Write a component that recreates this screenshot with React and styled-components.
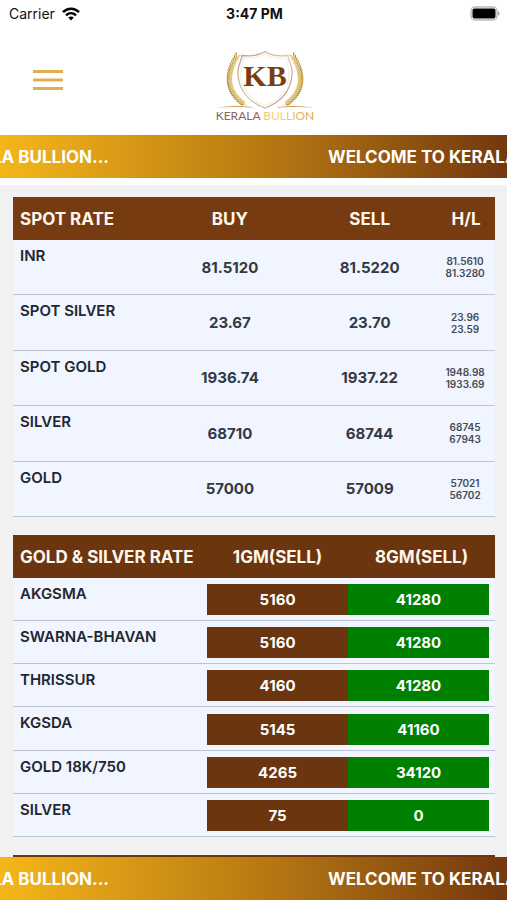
import React from "react";
import styled, { createGlobalStyle } from "styled-components";

const GlobalStyle = createGlobalStyle`
  *, *::before, *::after { box-sizing: border-box; }
  body {
    margin: 0;
    background: #f1f1f1;
    font-family: Inter, "Liberation Sans", sans-serif;
    color: #22262f;
  }
`;

const Screen = styled.div`
  display: flex;
  flex-direction: column;
  height: 100vh;
  overflow: hidden;
`;

const StatusBar = styled.div`
  display: grid;
  grid-template-columns: 1fr auto 1fr;
  align-items: center;
  height: 27px;
  padding: 0 7px 0 9px;
  background: #fff;
  font-size: 14px;
  color: #111;
`;

const Carrier = styled.span`
  display: flex;
  align-items: center;
  gap: 7px;
`;

const Clock = styled.time`
  font-weight: 700;
`;

const Battery = styled.svg`
  justify-self: end;
`;

const Header = styled.header`
  display: grid;
  grid-template-columns: 1fr auto 1fr;
  align-items: center;
  height: 108px;
  padding: 0 10px 0 32px;
  background: #fff;
`;

const MenuButton = styled.button`
  display: flex;
  width: 32px;
  padding: 0;
  border: 0;
  background: none;
  cursor: pointer;
`;

const Ticker = styled.div`
  display: flex;
  flex: none;
  align-items: center;
  gap: 219px;
  height: 43px;
  overflow: hidden;
  background: linear-gradient(90deg, #f5b61a 0%, #b87912 52%, #73380f 100%);
  color: #fff;
  font-size: 17px;
  font-weight: 700;
  white-space: nowrap;
`;

const Leaving = styled.span`
  display: flex;
  flex: 0 0 109px;
  justify-content: flex-end;
  min-width: 0;
`;

const Content = styled.main`
  display: flex;
  flex: 1;
  flex-direction: column;
  gap: 18px;
  min-height: 0;
  overflow: hidden;
  padding: 12px 12px 0 13px;
  border-top: 7px solid #fff;
`;

const RateTable = styled.table`
  flex: none;
  width: 100%;
  height: ${(p) => p.$height};
  border-collapse: separate;
  border-spacing: 0;
  table-layout: fixed;
  background: #f0f5ff;
`;

const Col = styled.col`
  width: ${(p) => p.$width};
`;

const HeadRow = styled.tr`
  height: 43px;
`;

const HeadCell = styled.th`
  padding: ${(p) => (p.$first ? "0 0 0 7px" : "0")};
  background: ${(p) => p.$tone};
  color: #fff6ec;
  font-size: 17px;
  font-weight: 700;
  line-height: 20px;
  text-align: ${(p) => (p.$first ? "left" : "center")};
  white-space: nowrap;
`;

const Row = styled.tr`
  & > * {
    border-bottom: 1px solid #bfc5cf;
  }
`;

const Name = styled.th`
  padding: 6px 0 0 7px;
  font-size: 15px;
  font-weight: 600;
  line-height: 20px;
  text-align: left;
  vertical-align: top;
  white-space: nowrap;
`;

const Price = styled.td`
  padding: 0;
  color: #333842;
  font-size: 15px;
  font-weight: 700;
  text-align: center;
`;

const HighLow = styled.td`
  padding: 0 2px 0 0;
  color: #454a54;
  font-size: 10px;
  font-weight: 600;
  line-height: 12px;
  text-align: center;
`;

const BadgeCell = styled.td`
  padding: ${(p) => (p.$last ? "6px 6px 5px 0" : "6px 0 5px")};
`;

const Badge = styled.div`
  background: ${(p) => p.$tone};
  color: #fff;
  font-size: 15px;
  font-weight: 700;
  line-height: 31px;
  text-align: center;
`;

const NextPanel = styled.div`
  flex: none;
  height: 43px;
  background: #6b360f;
`;

const spotRates = [
  ["INR", "81.5120", "81.5220", "81.5610", "81.3280"],
  ["SPOT SILVER", "23.67", "23.70", "23.96", "23.59"],
  ["SPOT GOLD", "1936.74", "1937.22", "1948.98", "1933.69"],
  ["SILVER", "68710", "68744", "68745", "67943"],
  ["GOLD", "57000", "57009", "57021", "56702"],
];

const localRates = [
  ["AKGSMA", "5160", "41280"],
  ["SWARNA-BHAVAN", "5160", "41280"],
  ["THRISSUR", "4160", "41280"],
  ["KGSDA", "5145", "41160"],
  ["GOLD 18K/750", "4265", "34120"],
  ["SILVER", "75", "0"],
];

// Stem points run from the foot of the branch to its tip.
const leaves = Array.from({ length: 24 }, (_, i) => {
  const t = i / 23;
  const u = 1 - t;
  const x = u * u * 29 + 2 * u * t * 4 + t * t * 22;
  const y = u * u * 56 + 2 * u * t * 38 + t * t * 8;
  const angle =
    (Math.atan2(2 * u * -18 + 2 * t * -30, 2 * u * -25 + 2 * t * 18) * 180) /
    Math.PI;
  return { x, y, angle };
});

function Branch() {
  return (
    <g>
      <path d="M29 56Q4 38 22 8" fill="none" stroke="#d9bd6c" strokeWidth="1.600" />
      {leaves.map(({ x, y, angle }, i) => (
        <g key={i} transform={`translate(${x} ${y}) rotate(${angle})`}>
          <ellipse cx="2" cy="-0.8" rx="1.900" ry="0.700" fill="#b88d38" transform="rotate(-32)" />
          <ellipse cx="2" cy="0.8" rx="1.800" ry="0.700" fill="#dcc06d" transform="rotate(32)" />
        </g>
      ))}
    </g>
  );
}

function Logo() {
  return (
    <svg width="100" height="83" viewBox="0 -8 100 83" role="img" aria-label="Kerala Bullion">
      <defs>
        <linearGradient id="rim" x1="0" y1="0" x2="1" y2="1">
          <stop offset="0" stopColor="#b79a91" />
          <stop offset="0.5" stopColor="#e0c9a8" />
          <stop offset="1" stopColor="#b58e83" />
        </linearGradient>
        <linearGradient id="gold" x1="0" y1="0" x2="1" y2="0">
          <stop offset="0" stopColor="#f0b545" />
          <stop offset="0.65" stopColor="#f5d06c" />
          <stop offset="1" stopColor="#d9a441" />
        </linearGradient>
      </defs>
      <Branch />
      <g transform="translate(100 0) scale(-1 1)">
        <Branch />
      </g>
      <path
        d="M50 3.500C43 8 35 8.500 27 7.500C27 13 22 17 23 26C24 43 34 54 50 60C66 54 76 43 77 26C78 17 73 13 73 7.500C65 8.500 57 8 50 3.500Z"
        fill="#fff"
        stroke="url(#rim)"
        strokeWidth="1.300"
      />
      <path
        d="M50 6C43 10 36 10.500 29 10C29 15 25 19 26 27C27 42 36 52 50 57.500C64 52 73 42 74 27C75 19 71 15 71 10C64 10.500 57 10 50 6Z"
        fill="none"
        stroke="#efe4d4"
        strokeWidth="0.800"
      />
      <path d="M1 60C12 58 24 57 35 59L27 55C31 58 36 59 39 60C27 58.500 13 59 1 60Z" fill="#c99a45" />
      <path d="M99 60C88 58 76 57 65 59L73 55C69 58 64 59 61 60C73 58.500 87 59 99 60Z" fill="#c99a45" />
      <text x="50" y="38" textAnchor="middle" fontFamily="Liberation Serif, serif" fontWeight="700" fontSize="30" fill="#7a3d12">
        KB
      </text>
      <text x="50" y="72" textAnchor="middle" fontFamily="Lato, sans-serif" fontSize="12" fill="#8f6455">
        KERALA <tspan fill="url(#gold)">BULLION</tspan>
      </text>
    </svg>
  );
}

function WelcomeTicker() {
  return (
    <Ticker>
      <Leaving>WELCOME TO KERALA BULLION...</Leaving>
      <span>WELCOME TO KERALA BULLION...</span>
    </Ticker>
  );
}

export default function App() {
  return (
    <Screen>
      <GlobalStyle />
      <StatusBar>
        <Carrier>
          Carrier
          <svg width="18" height="14" viewBox="0 0 18 14" fill="none" stroke="#000" strokeWidth="2.500" aria-hidden="true">
            <path d="M1 5.200C5.500 0.600 12.500 0.600 17 5.200" />
            <path d="M4 8.300C7 5.500 11 5.500 14 8.300" />
            <path d="M9 13.500L6.200 10.600C7.800 9.200 10.200 9.200 11.800 10.600Z" fill="#000" stroke="none" />
          </svg>
        </Carrier>
        <Clock>3:47 PM</Clock>
        <Battery width="30" height="15" viewBox="0 0 30 15" aria-hidden="true">
          <rect x="1" y="1" width="26" height="13" rx="4" fill="#fff" stroke="#b9b9b9" strokeWidth="1.400" />
          <rect x="2.500" y="2.500" width="23" height="10" rx="2" fill="#000" />
          <path d="M28 5Q31 7.500 28 10Z" fill="#a5a5a5" />
        </Battery>
      </StatusBar>

      <Header>
        <MenuButton type="button" aria-label="Menu">
          <svg width="32" height="24" viewBox="0 0 32 24" fill="#dfb04f" aria-hidden="true">
            <rect x="1" y="1" width="30" height="3" />
            <rect x="1" y="9.500" width="30" height="3" />
            <rect x="1" y="18" width="30" height="3" />
          </svg>
        </MenuButton>
        <Logo />
      </Header>

      <WelcomeTicker />

      <Content>
        <RateTable $height="320px">
          <colgroup>
            <Col $width="30%" />
            <Col $width="30%" />
            <Col $width="28%" />
            <Col $width="12%" />
          </colgroup>
          <thead>
            <HeadRow>
              <HeadCell scope="col" $tone="#773b11" $first>SPOT RATE</HeadCell>
              <HeadCell scope="col" $tone="#773b11">BUY</HeadCell>
              <HeadCell scope="col" $tone="#773b11">SELL</HeadCell>
              <HeadCell scope="col" $tone="#773b11">H/L</HeadCell>
            </HeadRow>
          </thead>
          <tbody>
            {spotRates.map(([name, buy, sell, high, low]) => (
              <Row key={name}>
                <Name scope="row">{name}</Name>
                <Price>{buy}</Price>
                <Price>{sell}</Price>
                <HighLow>
                  {high}
                  <br />
                  {low}
                </HighLow>
              </Row>
            ))}
          </tbody>
        </RateTable>

        <RateTable $height="302px">
          <colgroup>
            <Col $width="194px" />
            <Col $width="49%" />
            <Col $width="51%" />
          </colgroup>
          <thead>
            <HeadRow>
              <HeadCell scope="col" $tone="#6b360f" $first>GOLD &amp; SILVER RATE</HeadCell>
              <HeadCell scope="col" $tone="#6b360f">1GM(SELL)</HeadCell>
              <HeadCell scope="col" $tone="#6b360f">8GM(SELL)</HeadCell>
            </HeadRow>
          </thead>
          <tbody>
            {localRates.map(([name, one, eight]) => (
              <Row key={name}>
                <Name scope="row">{name}</Name>
                <BadgeCell>
                  <Badge $tone="#6b360f">{one}</Badge>
                </BadgeCell>
                <BadgeCell $last>
                  <Badge $tone="#008000">{eight}</Badge>
                </BadgeCell>
              </Row>
            ))}
          </tbody>
        </RateTable>

        <NextPanel />
      </Content>

      <WelcomeTicker />
    </Screen>
  );
}
